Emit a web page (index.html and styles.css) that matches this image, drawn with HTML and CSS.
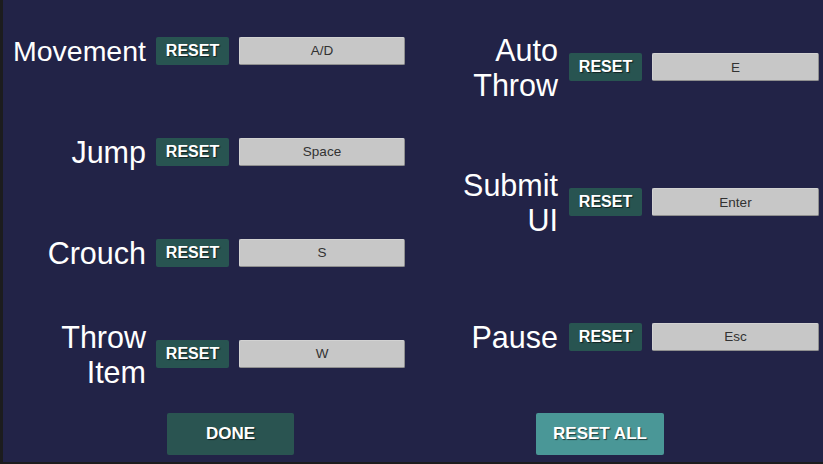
FILE: index.html
```html
<!DOCTYPE html>
<html>
<head>
<meta charset="utf-8">
<link rel="stylesheet" href="styles.css">
</head>
<body>
<div class="screen">
  <div class="columns">
    <div class="col col-left">
      <div class="row"><div class="label label-fit">Movement</div><button class="reset">RESET</button><div class="key">A/D</div></div>
      <div class="row"><div class="label">Jump</div><button class="reset">RESET</button><div class="key">Space</div></div>
      <div class="row"><div class="label">Crouch</div><button class="reset">RESET</button><div class="key">S</div></div>
      <div class="row"><div class="label">Throw<br>Item</div><button class="reset">RESET</button><div class="key">W</div></div>
    </div>
    <div class="col col-right">
      <div class="row"><div class="label">Auto<br>Throw</div><button class="reset">RESET</button><div class="key">E</div></div>
      <div class="row"><div class="label">Submit<br>UI</div><button class="reset">RESET</button><div class="key">Enter</div></div>
      <div class="row"><div class="label">Pause</div><button class="reset">RESET</button><div class="key">Esc</div></div>
    </div>
  </div>
  <div class="actions">
    <button class="big done">DONE</button>
    <button class="big reset-all">RESET ALL</button>
  </div>
</div>
</body>
</html>
```
FILE: styles.css
```css
html, body {
  margin: 0;
  padding: 0;
  background: #1c1c1e;
}
.screen {
  width: 820px;
  height: 462px;
  margin-left: 3px;
  background: #222347;
  font-family: "Liberation Sans", Arial, sans-serif;
  color: #ffffff;
  display: flex;
  flex-direction: column;
  overflow: hidden;
}
.columns {
  display: flex;
  height: 404px;
}
.col {
  display: flex;
  flex-direction: column;
}
.col-left {
  width: 412px;
}
.col-right {
  width: 408px;
}
.col-left .row {
  height: 101px;
}
.col-right .row {
  height: 135px;
}
.row {
  display: flex;
  align-items: center;
}
.label {
  width: 143px;
  text-align: right;
  font-size: 30.5px;
  line-height: 35px;
  padding-top: 2px;
  white-space: nowrap;
}
.label-fit {
  font-size: 28.5px;
}
.reset {
  margin-left: 10px;
  width: 73px;
  height: 28px;
  border: 0;
  border-radius: 2px;
  background: #285451;
  color: #ffffff;
  font-family: "Liberation Sans", Arial, sans-serif;
  font-weight: bold;
  font-size: 16px;
  padding: 0;
  text-shadow: 1px 1px 1px rgba(0,0,0,0.6);
}
.col-right .reset {
  margin-left: 11px;
}
.key {
  margin-left: 10px;
  width: 164px;
  height: 26px;
  border: 1px solid #8f8f8f;
  border-top-color: #d2d2d2;
  border-left-color: #d2d2d2;
  border-radius: 2px;
  background: #c7c7c7;
  color: #323232;
  font-size: 13.5px;
  display: flex;
  align-items: center;
  justify-content: center;
}
.col-right .key {
  width: 165px;
}
.actions {
  display: flex;
  padding-top: 9px;
  padding-left: 164px;
  gap: 242px;
}
.big {
  width: 127px;
  height: 42px;
  border: 0;
  border-radius: 2px;
  color: #ffffff;
  font-family: "Liberation Sans", Arial, sans-serif;
  font-weight: bold;
  font-size: 17px;
  padding: 0;
  text-shadow: 1px 1px 1px rgba(0,0,0,0.6);
}
.done {
  background: #2a5451;
}
.reset-all {
  width: 128px;
  background: #4a9797;
}
```
